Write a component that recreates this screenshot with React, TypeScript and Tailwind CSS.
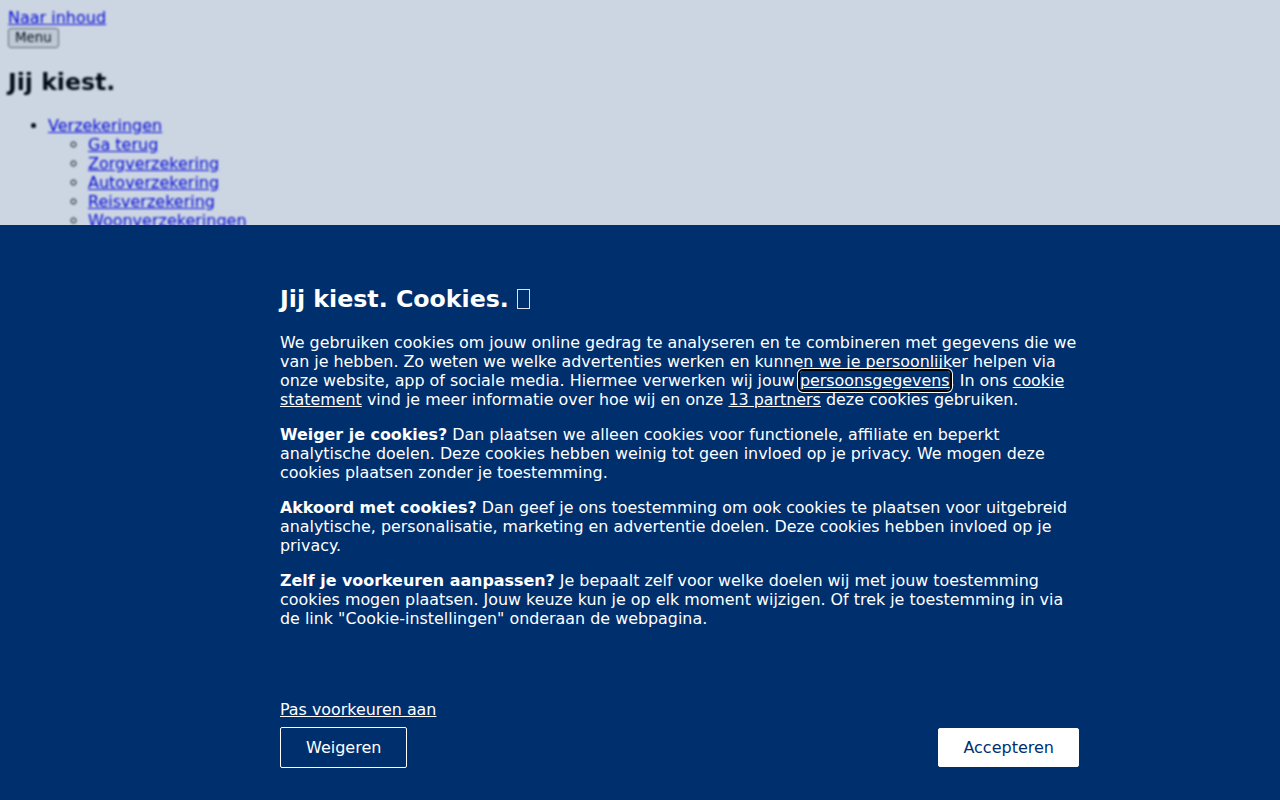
import React from "react";

const links = ["Ga terug", "Zorgverzekering", "Autoverzekering", "Reisverzekering", "Woonverzekeringen", "Rechtsbijstandverzekering", "Aansprakelijkheidsverzekering", "Uitvaartverzekering"];

export default function App() {
  return (
    <div className="relative h-[800px] overflow-hidden bg-white font-['DejaVu_Sans',sans-serif] text-black">
      {/* page behind the dialog */}
      <div className="blur-[1px] p-2 text-base leading-[19px]">
        <a href="#" className="text-[#0000ee] underline">
          Naar inhoud
        </a>
        <div>
          <button className="rounded-[3px] border border-[#767676] bg-[#efefef] px-[6px] py-[1px] text-[13.33px] leading-[16px]">
            Menu
          </button>
        </div>
        <h1 className="my-[20px] text-[23.6px] leading-[28px] font-bold">Jij kiest.</h1>
        <ul className="list-disc pl-10">
          <li>
            <a href="#" className="text-[#0000ee] underline">
              Verzekeringen
            </a>
            <ul className="list-[circle] pl-10">
              {links.map((l) => (
                <li key={l}>
                  <a href="#" className="text-[#0000ee] underline">
                    {l}
                  </a>
                </li>
              ))}
            </ul>
          </li>
        </ul>
      </div>

      {/* overlay + cookie dialog */}
      <div className="absolute inset-0 flex flex-col justify-end bg-[#002f6c]/20">
        <div className="h-[575px] bg-[#002f6e] text-white">
          <div className="ml-[280px] flex h-full w-[799px] flex-col pt-[60px] pb-8 text-[15.9px] leading-[19px]">
            <h2 className="mb-[20px] flex items-center text-[23.7px] leading-[28px] font-bold">
              Jij kiest. Cookies.
              <span className="ml-[8px] inline-block h-[20px] w-[13px] border border-[#dde3ee]"></span>
            </h2>
            <p>
              We gebruiken cookies om jouw online gedrag te analyseren en te combineren met gegevens die we
              van je hebben. Zo weten we welke advertenties werken en kunnen we je persoonlijker helpen via
              onze website, app of sociale media. Hiermee verwerken wij jouw{" "}
              <a href="#" className="rounded-[3px] underline outline-2 outline-black shadow-[0_0_0_3px_white]">
                persoonsgegevens
              </a>
              . In ons{" "}
              <a href="#" className="underline">
                cookie statement
              </a>{" "}
              vind je meer informatie over hoe wij en onze{" "}
              <a href="#" className="underline">
                13 partners
              </a>{" "}
              deze cookies gebruiken.
            </p>
            <p className="mt-4">
              <b>Weiger je cookies?</b> Dan plaatsen we alleen cookies voor functionele, affiliate en beperkt
              analytische doelen. Deze cookies hebben weinig tot geen invloed op je privacy. We mogen deze
              cookies plaatsen zonder je toestemming.
            </p>
            <p className="mt-4">
              <b>Akkoord met cookies?</b> Dan geef je ons toestemming om ook cookies te plaatsen voor uitgebreid
              analytische, personalisatie, marketing en advertentie doelen. Deze cookies hebben invloed op je
              privacy.
            </p>
            <p className="mt-4">
              <b>Zelf je voorkeuren aanpassen?</b> Je bepaalt zelf voor welke doelen wij met jouw toestemming
              cookies mogen plaatsen. Jouw keuze kun je op elk moment wijzigen. Of trek je toestemming in via
              de link "Cookie-instellingen" onderaan de webpagina.
            </p>
            <div className="mt-auto">
              <a href="#" className="underline">
                Pas voorkeuren aan
              </a>
            </div>
            <div className="mt-2 flex items-center justify-between text-base">
              <button className="rounded-[2px] border border-white px-[25px] py-[10px] leading-[19px] text-white">
                Weigeren
              </button>
              <button className="rounded-[2px] border border-white bg-white px-[24px] py-[9px] leading-[19px] text-[#002f6e]">
                Accepteren
              </button>
            </div>
          </div>
        </div>
      </div>
    </div>
  );
}
